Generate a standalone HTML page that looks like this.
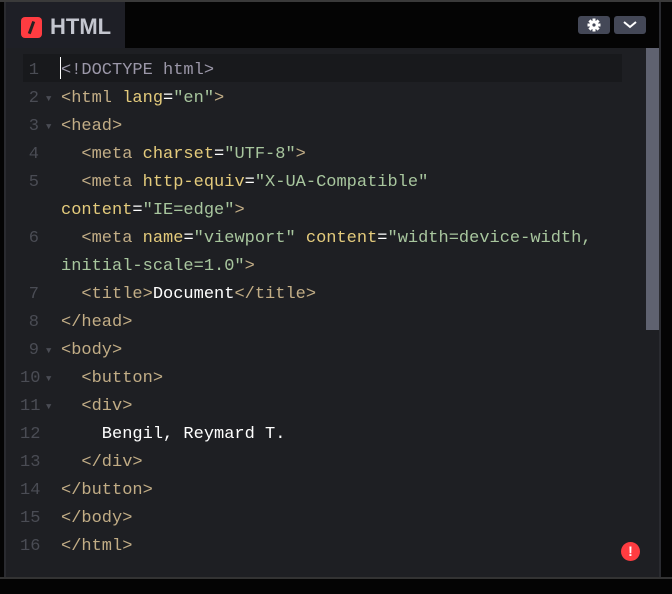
<!DOCTYPE html>
<html><head><style>
body{margin:0;width:672px;height:594px;background:#040404;position:relative;overflow:hidden;font-family:"Liberation Mono",monospace}
.top{position:absolute;left:0;top:0;width:672px;height:2px;background:#3a3a3a}
.lb{position:absolute;left:4px;top:2px;width:2px;height:576px;background:#2a2b30}
.tab{position:absolute;left:6px;top:2px;width:119px;height:46px;background:#1e1f26}
.logo{position:absolute;width:21px;height:21px;background:#ff3c41;border-radius:4px}
.logo:after{content:"";position:absolute;left:9px;top:4px;width:2.5px;height:13px;background:#222;transform:rotate(20deg)}
.tt{position:absolute;font:bold 22px "Liberation Sans",sans-serif;color:#c4c6cf}
.btn{position:absolute;top:16px;height:18px;background:#444857;border-radius:3px}
.ed{position:absolute;left:6px;top:48px;width:653px;height:529px;background:#1e1f23}
.rb{position:absolute;left:659px;top:2px;width:2px;height:576px;background:#2a2b30}
.bb{position:absolute;left:0;top:577px;width:672px;height:2px;background:#333}
.sb{position:absolute;left:646px;top:48px;width:13px;height:282px;background:#5f6270}
.al{position:absolute;left:23px;top:54px;width:599px;height:28px;background:#18191c}
.cur{position:absolute;left:60px;top:57px;width:1px;height:22px;background:#fff}
.l{position:absolute;left:0;height:28px;line-height:28px;font-size:17px;white-space:pre;color:#fff;margin-top:3px}
.n{position:absolute;left:20px;width:19px;text-align:right;color:#4a4c54}
.f{position:absolute;left:46px;color:#4a4c54;font-size:9px}
.c{position:absolute;left:61px}
.t{color:#c2ad86}.a{color:#e4cb7c}.s{color:#a8c69e}.d{color:#9b97a8}
.err{position:absolute;left:621px;top:542px;width:19px;height:19px;border-radius:50%;background:#ff3c41;color:#fff;font:bold 14px "Liberation Sans",sans-serif;text-align:center;line-height:19px}
</style></head><body>
<div class="top"></div><div class="lb"></div><div class="rb"></div>
<div class="tab"><div class="logo" style="left:15px;top:15px"></div><div class="tt" style="left:44px;top:12px">HTML</div></div>
<div class="btn" style="left:578px;width:32px"><svg width="32" height="18"><g transform="translate(16 9)" fill="#fff"><circle r="4.5"/><rect x="-1.5" y="-6.5" width="3" height="13"/><rect x="-6.5" y="-1.5" width="13" height="3"/><rect x="-1.5" y="-6.5" width="3" height="13" transform="rotate(45)"/><rect x="-1.5" y="-6.5" width="3" height="13" transform="rotate(-45)"/><circle r="1.6" fill="#444857"/></g></svg></div>
<div class="btn" style="left:614px;width:32px"><svg width="32" height="18"><path d="M10 6l6 5 6-5" stroke="#fff" stroke-width="2" fill="none"/></svg></div>
<div class="ed"></div>
<div class="al"></div>
<div class="sb"></div>
<div class="l" style="top:54px"><span class="n">1</span><span class="c"><span class="d">&lt;!DOCTYPE html&gt;</span></span></div>
<div class="l" style="top:82px"><span class="n">2</span><span class="f">▼</span><span class="c"><span class="t">&lt;html </span><span class="a">lang</span>=<span class="s">"en"</span><span class="t">&gt;</span></span></div>
<div class="l" style="top:110px"><span class="n">3</span><span class="f">▼</span><span class="c"><span class="t">&lt;head&gt;</span></span></div>
<div class="l" style="top:138px"><span class="n">4</span><span class="c">  <span class="t">&lt;meta </span><span class="a">charset</span>=<span class="s">"UTF-8"</span><span class="t">&gt;</span></span></div>
<div class="l" style="top:166px"><span class="n">5</span><span class="c">  <span class="t">&lt;meta </span><span class="a">http-equiv</span>=<span class="s">"X-UA-Compatible"</span></span></div>
<div class="l" style="top:194px"><span class="c"><span class="a">content</span>=<span class="s">"IE=edge"</span><span class="t">&gt;</span></span></div>
<div class="l" style="top:222px"><span class="n">6</span><span class="c">  <span class="t">&lt;meta </span><span class="a">name</span>=<span class="s">"viewport"</span> <span class="a">content</span>=<span class="s">"width=device-width,</span></span></div>
<div class="l" style="top:250px"><span class="c"><span class="s">initial-scale=1.0"</span><span class="t">&gt;</span></span></div>
<div class="l" style="top:278px"><span class="n">7</span><span class="c">  <span class="t">&lt;title&gt;</span>Document<span class="t">&lt;/title&gt;</span></span></div>
<div class="l" style="top:306px"><span class="n">8</span><span class="c"><span class="t">&lt;/head&gt;</span></span></div>
<div class="l" style="top:334px"><span class="n">9</span><span class="f">▼</span><span class="c"><span class="t">&lt;body&gt;</span></span></div>
<div class="l" style="top:362px"><span class="n">10</span><span class="f">▼</span><span class="c">  <span class="t">&lt;button&gt;</span></span></div>
<div class="l" style="top:390px"><span class="n">11</span><span class="f">▼</span><span class="c">  <span class="t">&lt;div&gt;</span></span></div>
<div class="l" style="top:418px"><span class="n">12</span><span class="c">    Bengil, Reymard T.</span></div>
<div class="l" style="top:446px"><span class="n">13</span><span class="c">  <span class="t">&lt;/div&gt;</span></span></div>
<div class="l" style="top:474px"><span class="n">14</span><span class="c"><span class="t">&lt;/button&gt;</span></span></div>
<div class="l" style="top:502px"><span class="n">15</span><span class="c"><span class="t">&lt;/body&gt;</span></span></div>
<div class="l" style="top:530px"><span class="n">16</span><span class="c"><span class="t">&lt;/html&gt;</span></span></div>
<div class="cur"></div>
<div class="err">!</div>
<div class="bb"></div>
</body></html>
